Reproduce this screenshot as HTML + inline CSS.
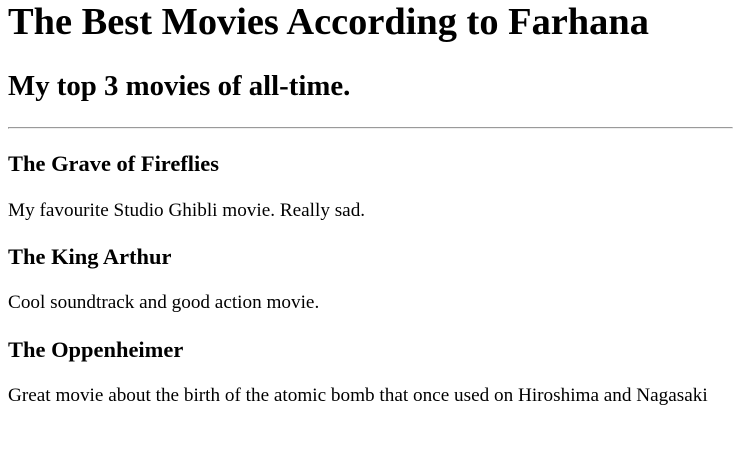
<!DOCTYPE html>
<html style="zoom:1.2">
<head>
<meta charset="utf-8">
<style>
body{margin:0 6.7px 8px 6.7px;font-family:"Liberation Serif","Times New Roman",Times,"DejaVu Serif",serif;color:#000;background:#fff;}
h1,h2,h3,p{font-family:"Liberation Serif","Times New Roman",Times,"DejaVu Serif",serif;}
h1{margin-top:0;}
</style>
</head>
<body>
<h1>The Best Movies According to Farhana</h1>
<h2>My top 3 movies of all-time.</h2>
<hr>
<h3>The Grave of Fireflies</h3>
<p>My favourite Studio Ghibli movie. Really sad.</p>
<h3>The King Arthur</h3>
<p>Cool soundtrack and good action movie.</p>
<h3>The Oppenheimer</h3>
<p>Great movie about the birth of the atomic bomb that once used on Hiroshima and Nagasaki</p>
</body>
</html>
